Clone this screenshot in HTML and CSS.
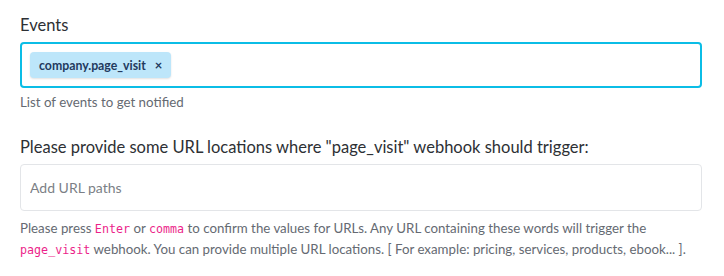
FILE: index.html
```html
<!DOCTYPE html>
<html lang="en">
<head>
  <meta charset="UTF-8">
  <title>Webhook events</title>
  <link rel="stylesheet" href="styles.css">
</head>
<body>
  <div class="champ">
    <label class="titre">Events</label>
    <div class="saisie active">
      <span class="puce">company.page_visit <span class="fermer">×</span></span>
    </div>
    <div class="aide">List of events to get notified</div>
  </div>

  <div class="champ">
    <label class="titre">Please provide some URL locations where "page_visit" webhook should trigger:</label>
    <div class="saisie grande">
      <input type="text" placeholder="Add URL paths">
    </div>
    <div class="aide lignes">Please press <code>Enter</code> or <code>comma</code> to confirm the values for URLs. Any URL containing these words will trigger the <code>page_visit</code> webhook. You can provide multiple URL locations. [ For example: pricing, services, products, ebook... ].</div>
  </div>
</body>
</html>
```

FILE: styles.css
```css
body {
  font-family: Lato, "Open Sans", sans-serif;
  margin: 0;
  padding: 13px 22px 0 20px;
  color: #2d3034;
  background: #fff;
}
.champ {
  margin-bottom: 23px;
}
.titre {
  display: block;
  font-size: 16.5px;
  line-height: 24px;
  margin-bottom: 5px;
}
.saisie {
  box-sizing: border-box;
  height: 46px;
  border: 1px solid #e3e5e8;
  border-radius: 4px;
  padding: 0 9px;
  display: flex;
  align-items: center;
}
.saisie.grande {
  height: 47px;
}
.saisie.active {
  border: 2px solid #0bbde6;
  padding: 0 8px;
}
.puce {
  display: inline-flex;
  align-items: center;
  height: 26px;
  padding: 0 9px 0 9px;
  background: #bde6fa;
  border-radius: 4px;
  box-shadow: 0 1px 2px rgba(0, 0, 0, 0.12);
  color: #233a5e;
  font-weight: bold;
  font-size: 12.3px;
}
.fermer {
  margin-left: 9px;
  font-size: 13px;
}
input {
  border: none;
  outline: none;
  width: 100%;
  font-family: inherit;
  font-size: 14px;
  color: #333;
  padding: 0;
}
input::placeholder {
  color: #7b7f86;
}
.aide {
  font-size: 13.3px;
  line-height: 20px;
  color: #656a72;
  margin-top: 4px;
}
.lignes {
  margin-top: 7px;
}
code {
  font-family: "DejaVu Sans Mono", monospace;
  font-size: 11.7px;
  color: #ec1f8a;
}
```
